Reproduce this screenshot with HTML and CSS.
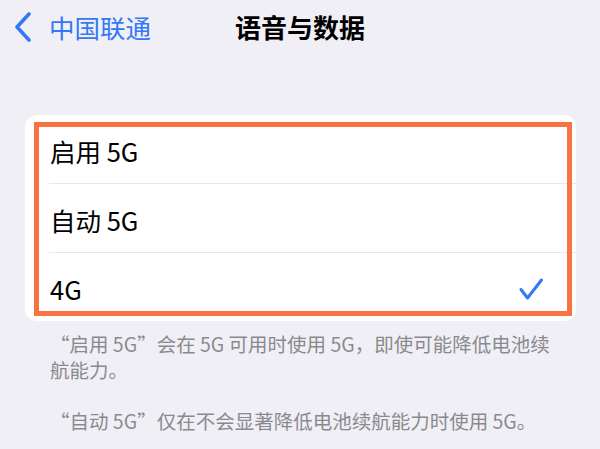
FILE: index.html
```html
<!DOCTYPE html>
<html lang="zh-CN">
<head>
<meta charset="utf-8">
<link rel="stylesheet" href="styles.css">
</head>
<body>
<header class="nav">
  <div class="back">
    <svg class="chev" width="20" height="30" viewBox="0 0 20 30"><path d="M16 2 L4 15 L16 28" fill="none" stroke="#3478f6" stroke-width="3.6" stroke-linecap="round" stroke-linejoin="round"/></svg>
    <span class="back-label">中国联通</span>
  </div>
  <h1 class="title">语音与数据</h1>
</header>
<main>
  <section class="card">
    <div class="row"><span class="label">启用 5G</span></div>
    <div class="sep"></div>
    <div class="row"><span class="label">自动 5G</span></div>
    <div class="sep"></div>
    <div class="row"><span class="label">4G</span>
      <svg class="check" width="26" height="24" viewBox="0 0 26 24"><path d="M3 12.5 L9.5 21 L23.5 3" fill="none" stroke="#3478f6" stroke-width="3" stroke-linecap="round" stroke-linejoin="round"/></svg>
    </div>
    <div class="highlight"></div>
  </section>
  <div class="footer">
    <p>“启用 5G”会在 5G 可用时使用 5G，即使可能降低电池续航能力。</p>
    <p>“自动 5G”仅在不会显著降低电池续航能力时使用 5G。</p>
  </div>
</main>
</body>
</html>
```
FILE: styles.css
```css
* { box-sizing: border-box; }
html, body {
  margin: 0;
  padding: 0;
  background: #f0eff5;
  font-family: "Noto Sans CJK SC", "Noto Sans", sans-serif;
  width: 600px;
  height: 449px;
  overflow: hidden;
}
.nav {
  position: relative;
  height: 54px;
  display: flex;
  align-items: center;
  justify-content: center;
}
.back {
  position: absolute;
  left: 13px;
  top: 12px;
  display: flex;
  align-items: center;
  color: #3478f6;
}
.chev { display: block; }
.back-label {
  font-size: 25.5px;
  line-height: 30px;
  margin-left: 16px;
}
.title {
  margin: 0;
  font-size: 26px;
  font-weight: 700;
  line-height: 30px;
  color: #000;
}
main { padding-top: 61px; }
.card {
  position: relative;
  margin: 0 24px 0 25px;
  background: #fff;
  border-radius: 12px;
}
.row {
  height: 68px;
  display: flex;
  align-items: center;
  justify-content: space-between;
  padding: 3px 32px 0 25px;
}
.row:last-of-type { height: 69px; }
.label {
  font-size: 25.5px;
  color: #000;
}
.sep {
  height: 1px;
  margin-left: 24px;
  background: #e6e6eb;
}
.check { display: block; }
.highlight {
  position: absolute;
  left: 9px;
  top: 7px;
  right: 4px;
  bottom: 5px;
  border: 5px solid #f97241;
}
.footer {
  padding: 10px 50px 0 50px;
  color: #8a8a8e;
  font-size: 19.5px;
  line-height: 26px;
}
.footer p { margin: 0 0 25px 0; }
```
